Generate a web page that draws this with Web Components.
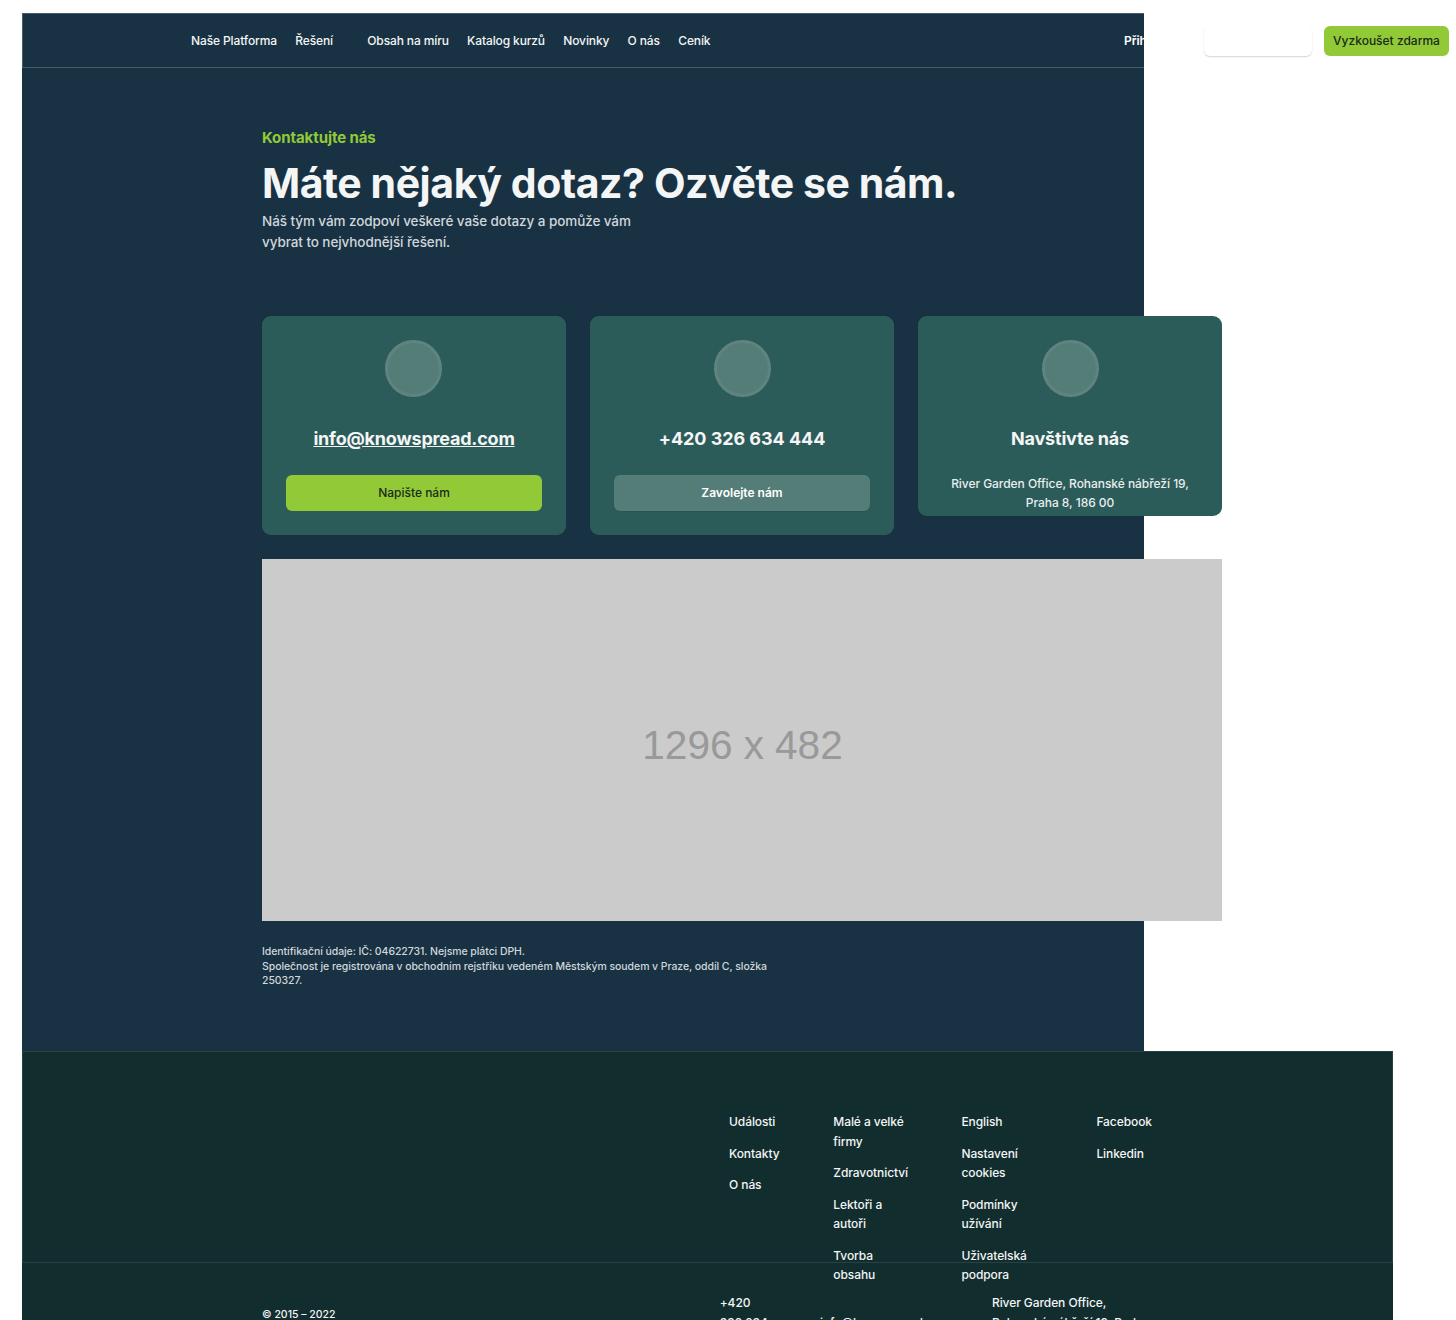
<!DOCTYPE html>
<html lang="cs">
<head>
<meta charset="utf-8">
<title>Kontakty – Knowspread</title>
<style>
html{overflow:hidden;background:#fff}
body{margin:0;height:1320px;overflow:hidden;font:500 12px/19.5px Inter,"Liberation Sans",sans-serif;letter-spacing:-.08px;color:#f4f5f5;-webkit-font-smoothing:antialiased}
</style>
</head>
<body>
<contact-page></contact-page>
<script>
function define(name, css, html) {
  const t = document.createElement('template');
  t.innerHTML = `<style>*{box-sizing:border-box}${css}</style>${html}`;
  customElements.define(name, class extends HTMLElement {
    constructor() {
      super();
      this.attachShadow({mode: 'open'}).append(t.content.cloneNode(true));
    }
  });
}

define('ks-button', `
:host{display:flex;align-items:center;justify-content:center;box-sizing:border-box;border-radius:6px;white-space:nowrap;height:36px;background:#92c937;color:#192b1b;letter-spacing:0}
:host([kind=ghost]){background:#557d78;color:#fff;font-weight:600;box-shadow:0 1px 1px rgba(16,24,40,.12)}
:host([kind=plain]){background:#fff;color:#fff;box-shadow:0 1px 1.5px rgba(16,24,40,.18)}
:host([small]){height:30px}
`, `<slot></slot>`);

define('nav-link', `
:host{display:flex;white-space:nowrap}
:host([menu]){padding-right:16px}
`, `<slot></slot>`);

define('top-bar', `
:host{display:flex;box-sizing:border-box;height:55px;border:1px solid #465b69;border-right:0;align-items:center;padding-left:168px}
nav{display:flex;gap:18.3px;width:933px;flex:none;letter-spacing:-.12px}
.login{width:80px;flex:none;font-weight:600;color:#fff;white-space:nowrap;overflow:hidden}
.plain{width:108px;flex:none;margin-right:12px}
.try{width:125px;flex:none}
`, `<nav><nav-link>Naše Platforma</nav-link><nav-link menu>Řešení</nav-link><nav-link>Obsah na míru</nav-link><nav-link>Katalog kurzů</nav-link><nav-link>Novinky</nav-link><nav-link>O nás</nav-link><nav-link>Ceník</nav-link></nav>
<span class="login">Přihlásit se</span><ks-button class="plain" kind="plain" small></ks-button><ks-button class="try" small>Vyzkoušet zdarma</ks-button>`);

define('page-intro', `
:host{display:block;height:248px;padding-top:60px;box-sizing:border-box}
.eyebrow{font-size:15px;line-height:20px;font-weight:700;color:#92c937;letter-spacing:-.08px}
h1{margin:9px 0 1px;font-size:41px;line-height:53px;font-weight:700;letter-spacing:-.44px;white-space:nowrap}
p{margin:0;font-size:13.5px;line-height:21px;width:400px;color:#d1d6da}
`, `<div class="eyebrow">Kontaktujte nás</div><h1>Máte nějaký dotaz? Ozvěte se nám.</h1><p>Náš tým vám zodpoví veškeré vaše dotazy a pomůže vám<br>vybrat to nejvhodnější řešení.</p>`);

define('contact-card', `
:host{display:flex;flex-direction:column;align-items:stretch;box-sizing:border-box;width:304px;height:219px;border-radius:9px;background:#2c5c5a;padding:24px;text-align:center}
:host([short]){height:200px}
i{flex:none;width:57px;height:57px;border-radius:50%;border:3px solid #5f8480;background:#557d78;align-self:center;margin-left:1px}
:host(:first-child) i{margin:0 1px 0 0}
h2{flex:none;margin:27px 0 21px;font-size:18px;line-height:30px;font-weight:700;letter-spacing:-.2px}
`, `<i></i><h2><slot name="title"></slot></h2><slot></slot>`);

define('image-placeholder', `
:host{display:flex;align-items:center;justify-content:center;box-sizing:border-box;width:960px;height:362px;background:#cbcbcb;color:#999;font:400 40.6px/48px "Liberation Sans",Arial,sans-serif;letter-spacing:-.05px;padding:9px 0 0 1px}
`, `<slot></slot>`);

define('link-column', `
:host{display:flex;flex-direction:column;gap:12px;flex:none}
::slotted(span){display:block}
`, `<slot></slot>`);

define('site-footer', `
:host{display:block;width:1371px;height:269px;background:#112d2e;overflow:hidden}
.top{display:flex;height:212px;border:1px solid #264245;padding:60px 0 0 706px}
.c1{width:104.3px}.c2{width:128.1px}.c3{width:135px}
.bottom{display:flex;padding:30px 0 0 240px}
.copy{width:457.7px;font-size:10.5px;padding-top:12px;flex:none;letter-spacing:0}
.tel{width:100.3px;flex:none}.mail{width:172px;flex:none;padding-top:19.5px}
`, `<div class="top">
<link-column class="c1"><span>Události</span><span>Kontakty</span><span>O nás</span></link-column>
<link-column class="c2"><span>Malé a velké<br>firmy</span><span>Zdravotnictví</span><span>Lektoři a<br>autoři</span><span>Tvorba<br>obsahu</span></link-column>
<link-column class="c3"><span>English</span><span>Nastavení<br>cookies</span><span>Podmínky<br>užívání</span><span>Uživatelská<br>podpora</span></link-column>
<link-column><span>Facebook</span><span>Linkedin</span></link-column>
</div>
<div class="bottom"><span class="copy">© 2015 – 2022</span><span class="tel">+420<br>326 634</span><span class="mail">info@knowspread.com</span><span>River Garden Office,<br>Rohanské nábřeží 19, Praha</span></div>`);

define('contact-page', `
:host{display:block;margin:13px 0 0 22px}
main{width:1122px;height:1038px;background:#183244}
section{margin-left:240px;width:960px}
.cards{display:flex;gap:24px;align-items:flex-start}
image-placeholder{margin-top:24px}
.legal{margin:24px 0 0;font-size:10.5px;line-height:14.5px;letter-spacing:-.065px;color:#d1d6da}
a{color:inherit;text-decoration:underline}
.phone{letter-spacing:-.05px}
.addr{color:#e9eeee;margin-top:-1.5px;letter-spacing:-.05px}
`, `<main><top-bar></top-bar><section>
<page-intro></page-intro>
<div class="cards">
<contact-card><a slot="title">info@knowspread.com</a><ks-button>Napište nám</ks-button></contact-card>
<contact-card><span slot="title" class="phone">+420 326 634 444</span><ks-button kind="ghost">Zavolejte nám</ks-button></contact-card>
<contact-card short><span slot="title">Navštivte nás</span><div class="addr">River Garden Office, Rohanské nábřeží 19,<br>Praha 8, 186 00</div></contact-card>
</div>
<image-placeholder>1296 x 482</image-placeholder>
<p class="legal">Identifikační údaje: IČ: 04622731. Nejsme plátci DPH.<br>Společnost je registrována v obchodním rejstříku vedeném Městským soudem v Praze, oddíl C, složka<br>250327.</p>
</section></main><site-footer></site-footer>`);
</script>
</body>
</html>
